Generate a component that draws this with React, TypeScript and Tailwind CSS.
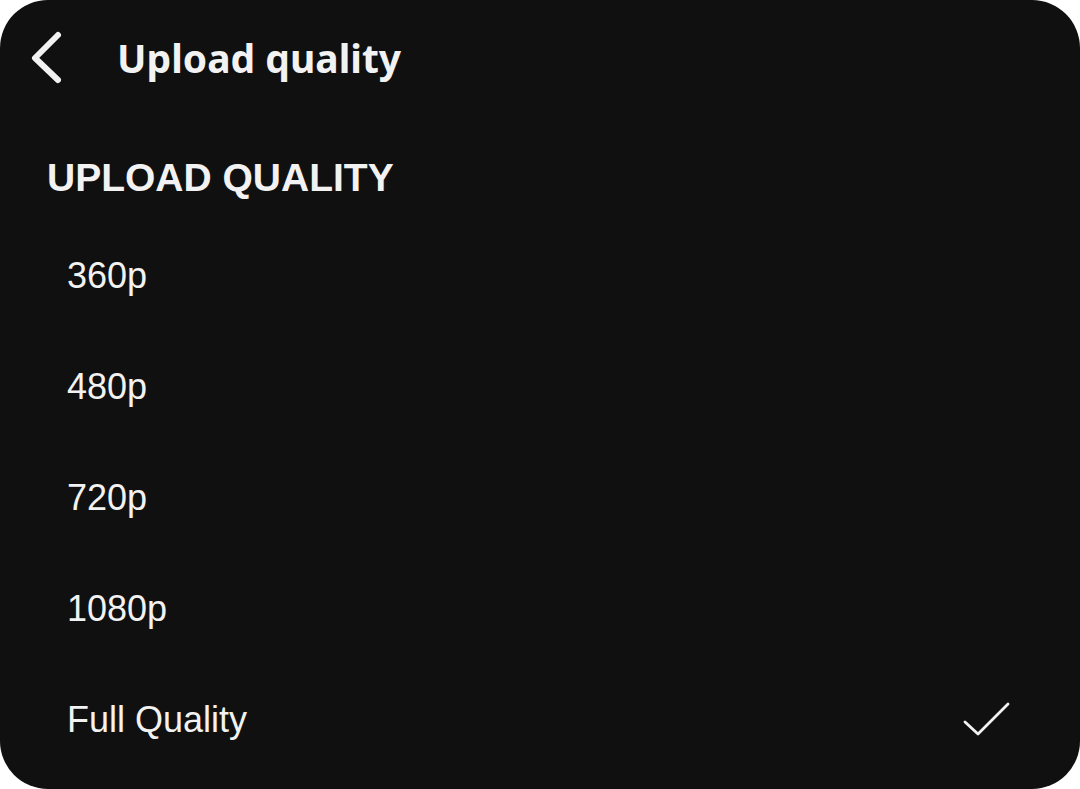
import React from "react";

const items = ["360p", "480p", "720p", "1080p", "Full Quality"];

export default function App() {
  return (
    <div className="w-[1080px] h-[789px] bg-white">
      <div className="w-full h-full rounded-[48px] bg-[#101010] text-[#f2f2f2] overflow-hidden">
        <div className="h-[114px] flex items-center">
          <svg width="40" height="60" viewBox="0 0 40 60" className="ml-[27px]">
            <path d="M31 8 L8 31 L31 53" fill="none" stroke="#f2f2f2" strokeWidth="6" strokeLinecap="round" strokeLinejoin="round" />
          </svg>
          <div className="ml-[50px] text-[39px] font-bold leading-none" style={{ fontFamily: '"Noto Sans", sans-serif' }}>
            Upload quality
          </div>
        </div>
        <div className="mt-[44px] pl-[47px] text-[39px] font-bold leading-[40px]" style={{ fontFamily: '"Liberation Sans", Arial, sans-serif' }}>
          UPLOAD QUALITY
        </div>
        <div className="mt-[22px]">
          {items.map((it, i) => (
            <div key={it} className="h-[111px] flex items-center justify-between pl-[67px] pr-[70px]">
              <span className="text-[36px] leading-none" style={{ fontFamily: '"Liberation Sans", Arial, sans-serif' }}>{it}</span>
              {i === items.length - 1 && (
                <svg width="48" height="36" viewBox="0 0 48 36">
                  <path d="M3 20 L16 32 L46 2" fill="none" stroke="#f2f2f2" strokeWidth="2.8" strokeLinecap="round" strokeLinejoin="round" />
                </svg>
              )}
            </div>
          ))}
        </div>
      </div>
    </div>
  );
}
